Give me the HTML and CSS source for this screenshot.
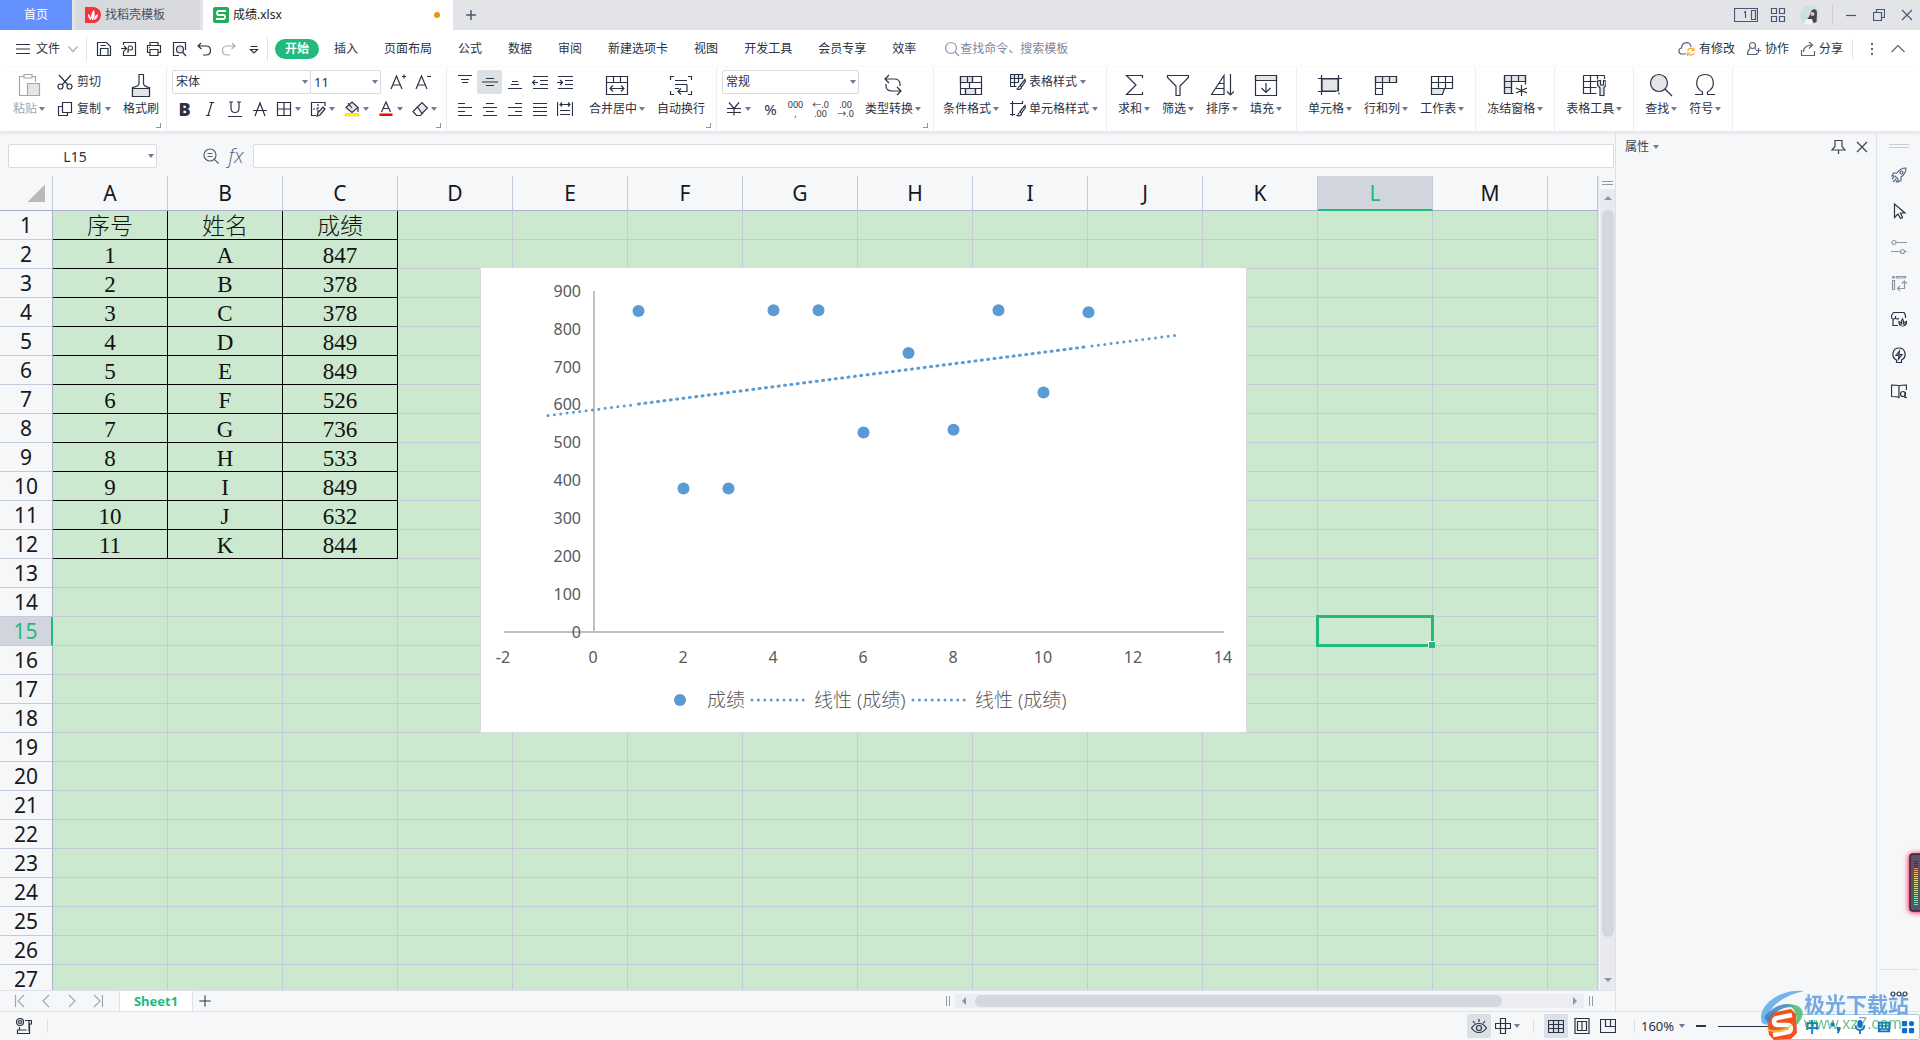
FILE: index.html
```html
<!DOCTYPE html>
<html lang="zh-CN">
<head>
<meta charset="utf-8">
<title>成绩.xlsx</title>
<link rel="stylesheet" href="styles.css">
</head>
<body>
<svg class="sprite" aria-hidden="true">
  <symbol id="menu" viewBox="0 0 16 16"><path d="M1 3.500h14M1 8h14M1 12.500h14"/></symbol>
  <symbol id="chev-down" viewBox="0 0 16 16"><path d="M3.500 5.500l4.500 5 4.500-5"/></symbol>
  <symbol id="save" viewBox="0 0 16 16"><path d="M1.500 1.500h9l4 4v9h-13zM4.500 14.500v-7h7.500v7M4.500 4.500h5"/></symbol>
  <symbol id="export" viewBox="0 0 16 16"><path d="M2.500 4V1.500h12v13h-12V10M0 7.500h5M3 5l2.500 2.500L3 10M7 12c0-2 0-7 1-7h2c2 0 2 4 0 4H7.500"/></symbol>
  <symbol id="print" viewBox="0 0 16 16"><path d="M4 4.500v-3h8v3M3.500 11.500h-2v-7h13v7h-2M4 8.500h8v6H4zM3 6.500h1"/></symbol>
  <symbol id="preview" viewBox="0 0 16 16"><path d="M14.500 9V1.500h-12v13H8"/><circle cx="9" cy="8.500" r="3.500" class="shade"/><path d="M11.500 11l3.500 4"/></symbol>
  <symbol id="undo" viewBox="0 0 16 16"><path d="M5 2L2 5l3.500 3M2 5h8c6 0 6 9 0 9H7"/></symbol>
  <symbol id="redo" viewBox="0 0 16 16"><path d="M11 2l3 3-3.500 3M14 5H6c-6 0-6 9 0 9h3"/></symbol>
  <symbol id="more" viewBox="0 0 16 16"><path d="M4.500 5.500h7M4.500 8.500L8 12l3.500-3.500z"/></symbol>
  <symbol id="search" viewBox="0 0 16 16"><circle cx="7" cy="7" r="5.500"/><path d="M11 11l4 4"/></symbol>
  <symbol id="cloud" viewBox="0 0 18 16"><path d="M8 13H4C0 13 0 7.500 3.500 7 4 0 13 0 13 6"/><path class="amber" d="M9.500 9.500C11 6.500 14.500 7 15.500 9M16 6.500V9.500h-3M16 12c-1.500 3-5 2.500-6 1M9.500 15v-3h3"/></symbol>
  <symbol id="collab" viewBox="0 0 16 16"><circle cx="6.500" cy="4.500" r="3"/><path d="M4 7.500C2 9 1.500 10 1.500 13.500h9.500v-2M9 7.500l1 1M10 9.500h5M12.500 7v5"/></symbol>
  <symbol id="share" viewBox="0 0 16 16"><path d="M1.500 9v5.500h13V10M3.500 11c0-5 4-7 8.500-7M9 1l3.500 3L9 7.500"/></symbol>
  <symbol id="chev-up" viewBox="0 0 16 16"><path d="M1.500 11L8 4.500 14.500 11"/></symbol>
  <symbol id="paste" viewBox="0 0 24 24"><path d="M7 3.500H2.500v19H10M15 3.500h3.500V9"/><path d="M7 1.500h8v3.500H7z"/><path class="shade" d="M10.500 10.500h12v12h-12z"/></symbol>
  <symbol id="cut" viewBox="0 0 16 16"><path d="M2 1l9 10M14 1L5 11"/><circle cx="3.500" cy="12.500" r="2.500"/><circle cx="12.500" cy="12.500" r="2.500"/></symbol>
  <symbol id="copy" viewBox="0 0 16 16"><path d="M5.500 1.500h9v10h-9zM5 5.500H1.500v9h9v-3"/></symbol>
  <symbol id="brush" viewBox="0 0 24 24"><path d="M3.500 23.500v-9c3-.5 6.500-1 6.500-4v-9h4.500v9c0 3 3 3.500 6 4v9z"/><path class="shade" d="M3.500 15.500h17v8h-17z"/></symbol>
  <symbol id="grow" viewBox="0 0 16 16"><path d="M1 15L6.500 2 12 15M3 11h7M12 2.500h4M14 .5v4"/></symbol>
  <symbol id="shrink" viewBox="0 0 16 16"><path d="M1 15L6.500 2 12 15M3 11h7M12 2.500h4"/></symbol>
  <symbol id="italic" viewBox="0 0 16 16"><path d="M7.500 1.500H12M4 14.500h4M10 1.500l-4 13"/></symbol>
  <symbol id="underline" viewBox="0 0 16 16"><path d="M4 1v6c0 6 8 6 8 0V1M1 15.500h14M2 1h4M10 1h4"/></symbol>
  <symbol id="strike" viewBox="0 0 16 16"><path d="M3 15L8 2l5 13M1 9.500h14"/></symbol>
  <symbol id="border" viewBox="0 0 16 16"><path d="M1.500 1.500h13v13h-13zM8 1.500v13M1.500 8h13"/></symbol>
  <symbol id="pen-border" viewBox="0 0 16 16"><path d="M15 5V1.500H1.500v13H6"/><path stroke-dasharray="2 1" d="M3 8h6M8 3v9"/><path class="shade" d="M7 15l1-3.500L13 6l2 2-5 6z"/></symbol>
  <symbol id="fill-color" viewBox="0 0 16 16"><path class="shade" d="M2 6.500L8 1l6 5.500-6 5z"/><path d="M4 2l4 5M14 6v5"/><path class="yellow" d="M1 12.500h14v2.500H1z"/></symbol>
  <symbol id="font-color" viewBox="0 0 16 16"><path d="M3.500 11L8 1l4.500 10M5 7.500h6"/><path class="red" d="M1.500 12.500h13v2.500h-13z"/></symbol>
  <symbol id="eraser" viewBox="0 0 16 16"><path class="shade" d="M5.500 6L10 1.500 15.500 7 10 12.500z"/><path d="M5.500 6L1 10.500l3.500 4h4l2-2.500"/></symbol>
  <symbol id="al-top" viewBox="0 0 16 16"><path d="M1 1.500h14M4 5.500h8M5 8.500h6"/></symbol>
  <symbol id="al-mid" viewBox="0 0 16 16"><path d="M4 4.500h8M0 8h16M4 11.500h8"/></symbol>
  <symbol id="al-bot" viewBox="0 0 16 16"><path d="M5 7.500h6M4 10.500h8M1 14.500h14"/></symbol>
  <symbol id="outdent" viewBox="0 0 16 16"><path d="M1 2.500h15M8 6.500h8M8 10.500h8M1 14.500h15M0 8.500h6M3 6L.5 8.500 3 11"/></symbol>
  <symbol id="indent" viewBox="0 0 16 16"><path d="M1 2.500h15M8 6.500h8M8 10.500h8M1 14.500h15M0 8.500h6M3 6l2.500 2.500L3 11"/></symbol>
  <symbol id="left" viewBox="0 0 16 16"><path d="M1 2.500h7M1 6.500h14M1 10.500h7M1 14.500h14"/></symbol>
  <symbol id="center" viewBox="0 0 16 16"><path d="M4 2.500h8M1 6.500h14M4 10.500h8M1 14.500h14"/></symbol>
  <symbol id="right" viewBox="0 0 16 16"><path d="M8 2.500h7M1 6.500h14M8 10.500h7M1 14.500h14"/></symbol>
  <symbol id="justify" viewBox="0 0 16 16"><path d="M1 2.500h14M1 6.500h14M1 10.500h14M1 14.500h14"/></symbol>
  <symbol id="distribute" viewBox="0 0 16 16"><path d="M.5 1v14M15.500 1v14M3 3.500h10M5 1.500l-2 2 2 2M11 1.500l2 2-2 2M3 9.500h10M3 13.500h10"/></symbol>
  <symbol id="merge" viewBox="0 0 24 24"><path d="M1.500 3.500h21v18h-21zM1.500 9.500h21M8.500 3.500v6M15.500 3.500v6M5 15.500h14M8 12.500l-3 3 3 3M16 12.500l3 3-3 3"/></symbol>
  <symbol id="wrap" viewBox="0 0 24 24"><path d="M5 3.500H1.500V7M19 3.500h3.500V7M1.500 18v3.500H5M22.500 18v3.500H19M6 7.500h12M6 11.500h12M6 15.500h4M18 11.500v7H9M12 15.500l-3 3 3 3"/></symbol>
  <symbol id="convert" viewBox="0 0 24 24"><path d="M8 2L4 6l4 4M4 6h9c4 0 6 2 6 5v2M16 22l4-4-4-4M20 18h-9c-4 0-6-2-6-5v-2"/></symbol>
  <symbol id="yen" viewBox="0 0 16 16"><path d="M3 1.500l5 6 5-6M1 7.500h14M1 11.500h14M8 7.500v7"/></symbol>
  <symbol id="cond" viewBox="0 0 24 24"><path class="shade" d="M1.500 3.500h12v6h-12zM6.500 15.500h10v6h-10z"/><path d="M1.500 3.500h21v18h-21zM1.500 9.500h21M1.500 15.500h21M13.500 3.500v6M8.500 3.500v6M10.500 9.500v6M6.500 15.500v6M16.500 15.500v6"/></symbol>
  <symbol id="tstyle" viewBox="0 0 16 16"><path class="shade" d="M.5.500h12v4H.5z"/><path d="M.5.500h12v4M.5.500v12h6M.5 4.500h12M.5 8.500h8M4.500.500v12M8.500.500v8M15 5.500l-5 6 1.500 1.500 4-5.500zM10 12c-2 0-1 3-3.500 3 3 1 5 0 5-2"/></symbol>
  <symbol id="cstyle" viewBox="0 0 16 16"><path d="M0 2.500h13M2.500 0v15M0 13.500h5M15 4.500l-5 6 1.500 1.500 4-5.500zM10 11.500c-2 0-1 3-3.500 3 3 1 5 0 5-2M12.500 0v3"/></symbol>
  <symbol id="sum" viewBox="0 0 24 24"><path d="M20.500 5V2.500h-16L14 12l-9.500 9.500h16V19"/></symbol>
  <symbol id="filter" viewBox="0 0 24 24"><path d="M1.500 2.500h21v2L14 13v9.500h-4V13L1.500 4.500z"/></symbol>
  <symbol id="sort" viewBox="0 0 24 24"><path d="M1.500 21.500L14 2.500v19zM6 15.500h8M9 10.500h5M20.500 1v21M17 18.500l3.500 3.500 3.500-3.500"/></symbol>
  <symbol id="fill" viewBox="0 0 24 24"><path class="shade" d="M1.500 2.500h21v5h-21z"/><path d="M1.500 2.500h21v20h-21zM12 10v9M7.500 15l4.500 4.500 4.500-4.500"/></symbol>
  <symbol id="cell" viewBox="0 0 24 24"><path class="shade" d="M4 6h16v12H4z"/><path d="M0 5.500h24M3.500 2v20M20.500 2v16M0 18.500h18M21 19.500v2"/></symbol>
  <symbol id="rowcol" viewBox="0 0 24 24"><path class="shade" d="M1.500 3.500h21v6h-21z"/><path d="M1.500 3.500h21v6h-14v12h-7zM8.500 3.500v6h-7M15.500 3.500v6M1.500 15.500h7"/></symbol>
  <symbol id="sheet" viewBox="0 0 24 24"><path class="shade" d="M1.500 15.500h13l-2 6h-11z"/><path d="M1.500 3.500h21v12h-21zM1.500 9.500h21M8.500 3.500v12M15.500 3.500v12"/></symbol>
  <symbol id="freeze" viewBox="0 0 24 24"><path class="shade" d="M1.500 2.500h21v6h-14v12h-7z"/><path d="M1.500 2.500h21v9M1.500 2.500v18h9M1.500 8.500h21M8.500 2.500v18M15.500 2.500v6M1.500 14.500h7M18.500 12v11M13 15l11 5M24 15l-11 5"/></symbol>
  <symbol id="tools" viewBox="0 0 24 24"><path d="M1.500 2.500h21M22.500 2.500V6M1.500 2.500v18h13M1.500 8.500h13M1.500 14.500h13M8.500 2.500v18M15.500 2.500v4"/><path class="shade" d="M15.500 8v4l2.500 3v7.500h4V15l2-3V8l-2.500-.5V12h-3V7.500z"/></symbol>
  <symbol id="find" viewBox="0 0 24 24"><circle class="shade" cx="10" cy="10" r="8.500"/><path d="M16 16l7 7"/></symbol>
  <symbol id="omega" viewBox="0 0 24 24"><path d="M2 21.500h7.500V19c-9-5-7-17.500 2.500-17.500S23.500 14 14.500 19v2.500H22"/></symbol>
  <symbol id="zoomout" viewBox="0 0 16 16"><circle cx="7" cy="7" r="6"/><path d="M4.500 5.500h5M4.500 8.500h5M11.500 11.500l4 4"/></symbol>
  <symbol id="pin" viewBox="0 0 16 16"><path d="M5 1.500h7v6l3 3.500H2l3-3.500zM8.500 11v4"/></symbol>
  <symbol id="close" viewBox="0 0 16 16"><path d="M3 3l10 10M13 3L3 13"/></symbol>
  <symbol id="rocket" viewBox="0 0 16 16"><path d="M15 1c-5 0-7 2-9 5H2.500L1 9h3l3 3v3l3-1.500V10c3-2 5-4 5-9zM1 12l2-2M2 15l3-3M5 15.500l1-2"/><circle cx="10.500" cy="5.500" r="1.500"/></symbol>
  <symbol id="pointer" viewBox="0 0 16 16"><path d="M3.500 1v13.500L7 11l2.500 4.500 2-1L9.500 10H14z"/></symbol>
  <symbol id="sliders" viewBox="0 0 16 16"><circle cx="3" cy="3.500" r="2"/><path d="M5 3.500h11M0 12.500h9.500M13.500 12.500H16"/><circle cx="11.500" cy="12.500" r="2"/></symbol>
  <symbol id="trans" viewBox="0 0 16 16"><path d="M1.500 1.500h2v1.500h-2zM5.500 1.500h9v1.500h-9zM1.500 5.500h2v9h-2zM7 13.500h6.500V7M9 11l-2.500 2.500L9 16M11 8.500L13.500 6 16 8.500"/></symbol>
  <symbol id="store" viewBox="0 0 16 16"><path d="M7 14.500H2V8M2.500 1.500h10.500l1.500 3V7M2.500 1.500L.5 4.500V7c1 1.500 3 1.500 4 0 1 1.500 2.500 1.500 3.500 0M4.500 5v2"/><path class="solid" d="M11.500 15.500C8 15.500 7 13 7.500 9.500l2 1.500 2-4.500 2 4.500 2.500-1.500c.5 3.500-1 6-4.500 6z"/><path stroke="#f5f7f9" stroke-width=".7" d="M11.500 9.500v5.500M9 11.500l2 3.500M14 11.500l-2 3.500"/></symbol>
  <symbol id="bulb" viewBox="0 0 16 16"><path d="M5.500 15.500h5V13c6-3 4-12-2.500-12S-.5 10 5.500 13zM8.500 4L5 8.500h3L7.500 12 11 7.500H8z"/></symbol>
  <symbol id="book" viewBox="0 0 16 16"><path d="M8 14.500c-2-1-4-1-7.500-1V2c4 0 6 0 7.500 1zM8 3c2-1 4-1 7.500-1v5"/><circle cx="12" cy="11" r="2.500"/><path d="M14 9v5.500h2"/></symbol>
  <symbol id="first" viewBox="0 0 16 16"><path d="M3.500 2v12M12 2L6 8l6 6"/></symbol>
  <symbol id="prev" viewBox="0 0 16 16"><path d="M11 2L5 8l6 6"/></symbol>
  <symbol id="next" viewBox="0 0 16 16"><path d="M5 2l6 6-6 6"/></symbol>
  <symbol id="last" viewBox="0 0 16 16"><path d="M4 2l6 6-6 6M12.500 2v12"/></symbol>
  <symbol id="plus" viewBox="0 0 16 16"><path d="M8 1.500v13M1.500 8h13"/></symbol>
  <symbol id="macro" viewBox="0 0 16 16"><circle class="shade" cx="4" cy="4" r="3.500"/><circle cx="4" cy="4" r="1.500"/><path d="M9 2.500h6.500V6h-2v9.500h-12V12h9M3.500 9v3M13 2.500V13"/></symbol>
  <symbol id="eye" viewBox="0 0 16 16"><path d="M.5 10c4-6 11-6 15 0-4 6-11 6-15 0zM8 1v3M2 3l2 2.500M14 3l-2 2.500"/><circle cx="8" cy="10" r="2.500"/></symbol>
  <symbol id="cross" viewBox="0 0 16 16"><path d="M5.500.500h5v5h5v5h-5v5h-5v-5h-5v-5h5zM5.500 5.500h5v5h-5z"/></symbol>
  <symbol id="gridview" viewBox="0 0 16 16"><path d="M.5 2.500h15v12H.5zM.5 6.500h15M.5 10.500h15M5.500 2.500v12M10.500 2.500v12"/></symbol>
  <symbol id="pageview" viewBox="0 0 16 16"><path d="M1 .5h14v15H1zM3.500 3.500h9v9h-9zM8 3.500v9"/></symbol>
  <symbol id="breakview" viewBox="0 0 16 16"><path d="M.5 1.500h15v13H.5zM5.500 1.500v7h10M10.500 1.500v7"/></symbol>
</svg>

<header class="titlebar">
  <button class="tab-home">首页</button>
  <button class="tab-doc">
    <svg class="logo" viewBox="0 0 16 16"><path fill="#f5333f" d="M0 0h8a8 8 0 010 16H0z"/><path fill="#fff" d="M7 13C5 9 7 5 9 3c1 3 1 7-1 10zM5.500 13C3 11 3 9 3 7c2 1 3 3 3 6zM9 13c0-3 1-5 4-6 0 3-1 5-4 6z"/></svg>
    <span>找稻壳模板</span>
  </button>
  <button class="tab-doc active">
    <svg class="logo" viewBox="0 0 16 16"><rect width="16" height="16" rx="2" fill="#1fae54"/><path fill="none" stroke="#fff" stroke-width="1.800" d="M13 4H5.500C3.500 4 3.500 8 5.500 8h5c2 0 2 4 0 4H3"/></svg>
    <span>成绩.xlsx</span><i class="unsaved"></i>
  </button>
  <button class="icon-btn new-tab" aria-label="新建"><svg class="i12"><use href="#plus"/></svg></button>
  <div class="window-tools">
    <svg class="win-docs" viewBox="0 0 24 14"><path d="M.5.500h23v13H.5zM17.500 2.500h4v9h-4zM11.500 10V3.500L10 4.500"/></svg>
    <svg class="i16" viewBox="0 0 16 16"><path d="M1.500 1.500h5v5h-5zM9.500 1.500h5v5h-5zM1.500 9.500h5v5h-5zM9.500 9.500h5v5h-5z"/></svg>
    <svg class="avatar" viewBox="0 0 20 20"><circle cx="10" cy="10" r="10" fill="#cddfe4"/><path fill="#eef3f5" d="M4 19c1-4 3-6 7-6l2 7z"/><path fill="#4b4148" d="M12 5c3-2 5 0 5 3l-.5 9-3 1-1.500-4-5 0c3-2 3-6 5-9z"/><circle cx="12.500" cy="9" r="2" fill="#e8c0b0"/></svg>
    <span class="vline"></span>
    <svg class="i12" viewBox="0 0 12 12"><path d="M1 6.500h10"/></svg>
    <svg class="i12" viewBox="0 0 12 12"><path d="M.5 3.500h8v8h-8zM3.500 3V.5h8v8H9"/></svg>
    <svg class="i12" viewBox="0 0 12 12"><path d="M1 1l10 10M11 1L1 11"/></svg>
  </div>
</header>

<nav class="menubar">
  <button class="file-btn"><svg class="i16"><use href="#menu"/></svg><span>文件</span><svg class="i16 pale"><use href="#chev-down"/></svg></button>
  <div class="quick">
    <button aria-label="保存"><svg class="i16"><use href="#save"/></svg></button>
    <button aria-label="输出"><svg class="i16"><use href="#export"/></svg></button>
    <button aria-label="打印"><svg class="i16"><use href="#print"/></svg></button>
    <button aria-label="预览"><svg class="i16"><use href="#preview"/></svg></button>
    <button aria-label="撤销"><svg class="i16"><use href="#undo"/></svg></button>
    <button aria-label="恢复"><svg class="i16 pale"><use href="#redo"/></svg></button>
    <button aria-label="更多"><svg class="i16"><use href="#more"/></svg></button>
  </div>
  <div class="menus">
    <button class="current">开始</button><button>插入</button><button>页面布局</button><button>公式</button><button>数据</button><button>审阅</button><button>新建选项卡</button><button>视图</button><button>开发工具</button><button>会员专享</button><button>效率</button>
  </div>
  <label class="search"><svg class="i16"><use href="#search"/></svg><input type="text" placeholder="查找命令、搜索模板"></label>
  <div class="account">
    <button><svg class="i18"><use href="#cloud"/></svg>有修改</button>
    <button><svg class="i16"><use href="#collab"/></svg>协作</button>
    <button><svg class="i16"><use href="#share"/></svg>分享</button>
    <span class="vline"></span>
    <button aria-label="更多"><svg class="dots" viewBox="0 0 4 12"><path d="M1 1h2M1 6h2M1 11h2"/></svg></button>
    <button aria-label="收起"><svg class="i16"><use href="#chev-up"/></svg></button>
  </div>
</nav>

<section class="ribbon">
  <div class="group clip">
    <button class="big disabled"><svg class="i24"><use href="#paste"/></svg><span>粘贴<i class="caret"></i></span></button>
    <div class="rows">
      <button class="inline"><svg class="i16"><use href="#cut"/></svg>剪切</button>
      <button class="inline"><svg class="i16"><use href="#copy"/></svg>复制<i class="caret"></i></button>
    </div>
    <button class="big"><svg class="i24"><use href="#brush"/></svg><span>格式刷</span></button>
    <i class="corner"></i>
  </div>
  <div class="group font">
    <div class="rows">
      <div class="row">
        <span class="pick family"><select aria-label="字体"><option>宋体</option></select></span><span class="pick size"><select aria-label="字号"><option>11</option></select></span>
        <button class="tool first" aria-label="增大字号"><svg class="i16"><use href="#grow"/></svg></button>
        <button class="tool" aria-label="减小字号"><svg class="i16"><use href="#shrink"/></svg></button>
      </div>
      <div class="row">
        <button class="tool bold">B</button>
        <button class="tool" aria-label="斜体"><svg class="i16"><use href="#italic"/></svg></button>
        <button class="tool" aria-label="下划线"><svg class="i16"><use href="#underline"/></svg></button>
        <button class="tool" aria-label="删除线"><svg class="i16"><use href="#strike"/></svg></button>
        <button class="drop" aria-label="边框"><svg class="i16"><use href="#border"/></svg><i class="caret"></i></button>
        <button class="drop" aria-label="绘制边框"><svg class="i16"><use href="#pen-border"/></svg><i class="caret"></i></button>
        <button class="drop" aria-label="填充颜色"><svg class="i16"><use href="#fill-color"/></svg><i class="caret"></i></button>
        <button class="drop" aria-label="字体颜色"><svg class="i16"><use href="#font-color"/></svg><i class="caret"></i></button>
        <button class="drop" aria-label="清除"><svg class="i16"><use href="#eraser"/></svg><i class="caret"></i></button>
      </div>
    </div>
    <i class="corner"></i>
  </div>
  <div class="group align">
    <div class="rows">
      <div class="row">
        <button class="tool" aria-label="顶端对齐"><svg class="i16"><use href="#al-top"/></svg></button>
        <button class="tool on" aria-label="垂直居中"><svg class="i16"><use href="#al-mid"/></svg></button>
        <button class="tool" aria-label="底端对齐"><svg class="i16"><use href="#al-bot"/></svg></button>
        <button class="tool" aria-label="减少缩进"><svg class="i16"><use href="#outdent"/></svg></button>
        <button class="tool" aria-label="增加缩进"><svg class="i16"><use href="#indent"/></svg></button>
      </div>
      <div class="row">
        <button class="tool" aria-label="左对齐"><svg class="i16"><use href="#left"/></svg></button>
        <button class="tool" aria-label="居中"><svg class="i16"><use href="#center"/></svg></button>
        <button class="tool" aria-label="右对齐"><svg class="i16"><use href="#right"/></svg></button>
        <button class="tool" aria-label="两端对齐"><svg class="i16"><use href="#justify"/></svg></button>
        <button class="tool" aria-label="分散对齐"><svg class="i16"><use href="#distribute"/></svg></button>
      </div>
    </div>
    <button class="big"><svg class="i24"><use href="#merge"/></svg><span>合并居中<i class="caret"></i></span></button>
    <button class="big"><svg class="i24"><use href="#wrap"/></svg><span>自动换行</span></button>
    <i class="corner"></i>
  </div>
  <div class="group number">
    <div class="rows">
      <div class="row"><span class="pick format"><select aria-label="数字格式"><option>常规</option></select></span></div>
      <div class="row">
        <button class="drop wide" aria-label="货币"><svg class="i16"><use href="#yen"/></svg><i class="caret"></i></button>
        <button class="tool pct">%</button>
        <button class="tool digits">000<br>,</button>
        <button class="tool digits">←.0<br>.00</button>
        <button class="tool digits">.00<br>→.0</button>
      </div>
    </div>
    <button class="big"><svg class="i24"><use href="#convert"/></svg><span>类型转换<i class="caret"></i></span></button>
    <i class="corner"></i>
  </div>
  <div class="group styles">
    <button class="big"><svg class="i24"><use href="#cond"/></svg><span>条件格式<i class="caret"></i></span></button>
    <div class="rows">
      <button class="inline"><svg class="i16"><use href="#tstyle"/></svg>表格样式<i class="caret"></i></button>
      <button class="inline"><svg class="i16"><use href="#cstyle"/></svg>单元格样式<i class="caret"></i></button>
    </div>
  </div>
  <div class="group editing">
    <button class="big"><svg class="i24"><use href="#sum"/></svg><span>求和<i class="caret"></i></span></button>
    <button class="big"><svg class="i24"><use href="#filter"/></svg><span>筛选<i class="caret"></i></span></button>
    <button class="big"><svg class="i24"><use href="#sort"/></svg><span>排序<i class="caret"></i></span></button>
    <button class="big"><svg class="i24"><use href="#fill"/></svg><span>填充<i class="caret"></i></span></button>
  </div>
  <div class="group">
    <button class="big"><svg class="i24"><use href="#cell"/></svg><span>单元格<i class="caret"></i></span></button>
    <button class="big"><svg class="i24"><use href="#rowcol"/></svg><span>行和列<i class="caret"></i></span></button>
    <button class="big"><svg class="i24"><use href="#sheet"/></svg><span>工作表<i class="caret"></i></span></button>
  </div>
  <div class="group"><button class="big"><svg class="i24"><use href="#freeze"/></svg><span>冻结窗格<i class="caret"></i></span></button></div>
  <div class="group"><button class="big"><svg class="i24"><use href="#tools"/></svg><span>表格工具<i class="caret"></i></span></button></div>
  <div class="group">
    <button class="big"><svg class="i24"><use href="#find"/></svg><span>查找<i class="caret"></i></span></button>
    <button class="big"><svg class="i24"><use href="#omega"/></svg><span>符号<i class="caret"></i></span></button>
  </div>
</section>

<main class="main">
  <section class="workspace">
    <div class="formula">
      <span class="pick namebox"><input type="text" aria-label="名称框" value="L15"></span>
      <button class="icon-btn" aria-label="浏览"><svg class="i16"><use href="#zoomout"/></svg></button>
      <button class="icon-btn fx">fx</button>
      <input class="formula-input" type="text" aria-label="编辑栏">
    </div>
    <div class="sheet">
      <div class="grid-wrap">
        <table class="grid" id="grid"></table>
        <svg class="chart" viewBox="1 1 765 464" role="img" aria-label="成绩散点图">
          <g class="axis"><path d="M114 24v341M24 365h720"/></g>
          <g class="ylabels">
            <text x="101" y="30">900</text><text x="101" y="68">800</text><text x="101" y="106">700</text><text x="101" y="143">600</text><text x="101" y="181">500</text><text x="101" y="219">400</text><text x="101" y="257">300</text><text x="101" y="295">200</text><text x="101" y="333">100</text><text x="101" y="371">0</text>
          </g>
          <g class="xlabels">
            <text x="23" y="396">-2</text><text x="113" y="396">0</text><text x="203" y="396">2</text><text x="293" y="396">4</text><text x="383" y="396">6</text><text x="473" y="396">8</text><text x="563" y="396">10</text><text x="653" y="396">12</text><text x="743" y="396">14</text>
          </g>
          <g class="points" id="points"></g>
          <path class="trend" d="M68 148.500L156 137.500M612 79L698 68"/>
          <path class="trend double" d="M158.500 137L608.500 79.500"/>
          <circle class="dot" cx="200" cy="433" r="6"/>
          <path class="trend" d="M272 433h54M433 433h54"/>
          <g class="legend"><text x="227" y="440">成绩</text><text x="334" y="440">线性 (成绩)</text><text x="495" y="440">线性 (成绩)</text></g>
        </svg>
      </div>
      <div class="vscroll">
        <i class="split-h"></i>
        <div class="vtrack"><i class="tri up"></i><i class="vthumb"></i><i class="tri down"></i></div>
      </div>
    </div>
    <footer class="sheetbar">
      <div class="sheetnav">
        <button aria-label="第一个"><svg class="i16"><use href="#first"/></svg></button>
        <button aria-label="上一个"><svg class="i16"><use href="#prev"/></svg></button>
        <button aria-label="下一个"><svg class="i16"><use href="#next"/></svg></button>
        <button aria-label="最后一个"><svg class="i16"><use href="#last"/></svg></button>
      </div>
      <button class="sheettab">Sheet1</button>
      <button class="icon-btn add-sheet" aria-label="新建工作表"><svg class="i16"><use href="#plus"/></svg></button>
      <div class="hscroll"><i class="split-v"></i><div class="htrack"><i class="tri prev"></i><i class="hthumb"></i><i class="tri next"></i></div><i class="split-v"></i></div>
    </footer>
  </section>
  <aside class="panel">
    <button class="panel-title">属性<i class="caret"></i></button>
    <button class="icon-btn" aria-label="固定"><svg class="i16"><use href="#pin"/></svg></button>
    <button class="icon-btn" aria-label="关闭"><svg class="i16"><use href="#close"/></svg></button>
  </aside>
  <aside class="rail">
    <i class="handle"></i>
    <button aria-label="快捷"><svg class="i16 slate"><use href="#rocket"/></svg></button>
    <button aria-label="选择"><svg class="i16"><use href="#pointer"/></svg></button>
    <button aria-label="设置"><svg class="i16 dim"><use href="#sliders"/></svg></button>
    <button aria-label="转置"><svg class="i16 dim"><use href="#trans"/></svg></button>
    <button aria-label="稻壳"><svg class="i16"><use href="#store"/></svg></button>
    <button aria-label="技巧"><svg class="i16"><use href="#bulb"/></svg></button>
    <button aria-label="帮助"><svg class="i16"><use href="#book"/></svg></button>
    <button class="rail-more" aria-label="更多"><svg viewBox="0 0 18 6"><circle cx="3" cy="3" r="2"/><circle cx="9" cy="3" r="2"/><circle cx="15" cy="3" r="2"/></svg></button>
  </aside>
</main>

<footer class="statusbar">
  <button class="icon-btn macro" aria-label="宏"><svg class="i16"><use href="#macro"/></svg></button>
  <span class="vline"></span>
  <div class="views">
    <button class="view on" aria-label="护眼"><svg class="i16"><use href="#eye"/></svg></button>
    <button class="view-drop" aria-label="阅读"><svg class="i16"><use href="#cross"/></svg><i class="caret"></i></button>
    <span class="vline"></span>
    <button class="view on" aria-label="普通视图"><svg class="i16"><use href="#gridview"/></svg></button>
    <button class="view" aria-label="页面布局"><svg class="i16"><use href="#pageview"/></svg></button>
    <button class="view" aria-label="分页预览"><svg class="i16"><use href="#breakview"/></svg></button>
    <span class="vline last"></span>
    <button class="zoom-level">160%<i class="caret"></i></button>
    <button class="minus" aria-label="缩小"></button>
    <i class="zoom-line"></i>
  </div>
</footer>

<svg class="meter" viewBox="0 0 18 72" aria-hidden="true">
  <defs><linearGradient id="heat" x1="0" y1="0" x2="0" y2="1"><stop offset="0" stop-color="#f58a6a"/><stop offset=".3" stop-color="#f2dd70"/><stop offset=".6" stop-color="#b9e08a"/><stop offset="1" stop-color="#63dcd8"/></linearGradient>
  <filter id="glow" x="-1" y="-.3" width="3" height="1.600"><feGaussianBlur stdDeviation="2.500"/></filter></defs>
  <rect x="6" y="7" width="20" height="60" rx="5" fill="#ff2d62" filter="url(#glow)"/>
  <rect x="8" y="8" width="20" height="57" rx="3" fill="#5f5263" stroke="#33283a" stroke-width="1.500"/>
  <path d="M14 15v7" stroke="#3b3140" stroke-width="4" stroke-dasharray="1 1"/>
  <rect x="12" y="22" width="4" height="38" fill="url(#heat)"/>
  <path d="M14 23v37" stroke="#5f5263" stroke-width="5" stroke-dasharray="1 1"/>
</svg>

<div class="ime">
  <b>中</b>
  <svg viewBox="0 0 16 16"><circle cx="4" cy="5" r="2.500"/><path d="M9 8h4v3l-2 4H9l1-3H9z"/></svg>
  <svg viewBox="0 0 16 16"><rect x="5" y="0" width="6" height="9" rx="3"/><path d="M2 6h2c0 6 8 6 8 0h2c0 4-2 6-5 6.500V16H7v-3.500C4 12 2 10 2 6z"/></svg>
  <svg viewBox="0 0 16 16"><path fill-rule="evenodd" d="M1 2h14v12H1zM3 4v2h2V4zM7 4v2h2V4zM11 4v2h2V4zM3 7.500v2h2v-2zM7 7.500v2h2v-2zM11 7.500v2h2v-2zM4 11v1h8v-1z"/></svg>
  <svg viewBox="0 0 16 16"><rect x="1" y="1" width="6" height="6" rx="1"/><rect x="9" y="1" width="6" height="6" rx="3"/><rect x="1" y="9" width="6" height="6" rx="1"/><rect x="9" y="9" width="6" height="6" rx="1"/></svg>
</div>
<svg class="ime-logo" viewBox="0 0 44 50" aria-hidden="true">
  <path fill="#f4511e" d="M11 23l20-4 5 5 1 19-6 6-17 1-5-5-2-17z"/>
  <path fill="none" stroke="#fff" stroke-width="4.500" d="M32 25l-15 3c-4 1-4 6 0 7l10 0c5 0 5 6 1 7l-15 3"/>
  <path fill="#5aaae8" opacity=".85" d="M44 1C20-2-4 16 2 33c3 2 5 2 7 1C3 22 20 6 44 1z"/>
  <path fill="#3d83c5" opacity=".85" d="M4 27c9-11 23-17 31-10-13-1-22 5-27 16z"/>
  <path fill="#4db96b" opacity=".85" d="M27 14c17 0 21 10 8 23 3-10 2-17-8-23z"/>
  <path fill="#e8c542" opacity=".85" d="M5 38c9 4 21 2 28-5-5 10-19 13-28 5z"/>
</svg>
<div class="watermark"><span class="wm-name">极光下载站</span><span class="wm-url">www.xz7.com</span></div>
<script src="app.js"></script>
</body>
</html>
```
FILE: styles.css
```css
:root {
  --ink: #2b3245;
  --line: #dfe1e8;
  --bg: #f5f7f9;
  --green: #22b97d;
  --cell: #cce8cf;
  --gridline: #c5c9dc;
  --head-line: #a9b0cc;
}
* { box-sizing: border-box; }
body {
  margin: 0;
  height: 100vh;
  display: flex;
  flex-direction: column;
  overflow: hidden;
  background: var(--bg);
  color: var(--ink);
  font: 12px/16px "Noto Sans", "Noto Sans CJK SC", sans-serif;
}
button, input, select { font: inherit; color: inherit; }
button { border: 0; padding: 0; background: none; display: flex; align-items: center; justify-content: center; white-space: nowrap; }
svg { fill: none; stroke: currentColor; stroke-width: 1.2px; flex: none; }
.sprite { position: absolute; width: 0; height: 0; }
.shade { fill: #e3e5e9; }
.solid { fill: currentColor; stroke: none; }
.amber { stroke: #f5a623; }
.yellow { fill: #ff0; stroke: #c9c900; stroke-width: 0.5px; }
.red { fill: #f00; stroke: none; }
.i12 { width: 12px; height: 12px; }
.i16 { width: 16px; height: 16px; }
.i18 { width: 18px; height: 16px; }
.i24 { width: 24px; height: 24px; }
.pale { color: #a9acb4; }
.dim { color: #9297a8; }
.slate { color: #586684; }
.vline { width: 1px; height: 20px; background: var(--line); }
.icon-btn { width: 24px; height: 24px; }
.caret { border: 3px solid transparent; border-top: 4px solid #6e7a96; border-bottom: 0; }

/* title bar */
.titlebar { display: flex; height: 30px; background: #e3e4e8; }
.tab-home { width: 72px; margin-right: 3px; background: #6591ff; color: #fff; }
.tab-doc { width: 125px; margin-right: 3px; padding: 0 10px; gap: 4px; justify-content: flex-start; background: #d8d9dc; color: #4b5060; }
.tab-doc.active { width: 250px; margin-right: 0; background: #fff; color: #222; }
.logo { width: 16px; height: 16px; stroke: none; }
.unsaved { width: 6px; height: 6px; margin-left: auto; margin-right: 3px; border-radius: 50%; background: #e59a0c; }
.new-tab { margin: 3px 6px; color: #4a556e; }
.new-tab svg { stroke-width: 2px; }
.window-tools { display: flex; align-items: center; gap: 16px; margin-left: auto; padding-right: 7px; color: #4a5878; }
.window-tools > .vline { margin: 0 -4px; background: #cbcdd3; }
.win-docs { width: 24px; height: 14px; margin-right: -4px; }
.avatar { width: 20px; height: 20px; margin-left: -2px; stroke: none; }

/* menu bar */
.menubar { display: flex; align-items: center; height: 37px; background: #fff; }
.file-btn { gap: 5px; padding-left: 15px; }
.quick { display: flex; margin: 0 7px 0 5px; border: solid var(--line); border-width: 0 1px; height: 24px; padding: 0 1px 0 4px; }
.quick button { width: 25px; }
.menus { display: flex; gap: 26px; align-items: center; }
.menus .current { width: 44px; height: 20px; margin-right: -11px; border-radius: 10px; background: var(--green); color: #fff; font-weight: 700; }
.search { display: flex; align-items: center; margin-left: 28px; color: #8d97b0; }
.search input { width: 140px; padding: 0; border: 0; outline: 0; }
.search input::placeholder { color: #8087a0; opacity: 1; }
.account { display: flex; align-items: center; gap: 11px; margin-left: auto; padding-right: 14px; }
.account button { gap: 3px; }
.account svg { color: #59627a; }
.account .vline { margin: 0 1px 0 -2px; }
.dots { width: 4px; height: 12px; stroke-width: 2px; margin: 0 5px; }

/* ribbon */
.ribbon { display: flex; height: 65px; background: #fff; border-bottom: 1px solid #e6e8ec; box-shadow: 0 1px 3px #dfe1e6; z-index: 1; flex: none; }
.group { position: relative; display: flex; align-items: flex-start; gap: 12px; padding: 3px 11px 0; border-right: 1px solid #eceef2; flex: none; }
.big { flex-direction: column; gap: 4px; padding-top: 3px; }
.big span { display: flex; align-items: center; gap: 2px; }
.disabled { color: #a3a6ad; }
.rows { display: flex; flex-direction: column; gap: 3px; }
.row { display: flex; height: 24px; }
.inline { height: 24px; gap: 4px; justify-content: flex-start; }
.tool { width: 25px; height: 24px; border-radius: 2px; }
.tool.first { margin-left: 4px; }
.tool.on { background: #dce1e6; }
.bold { font-size: 18px; font-weight: 900; }
.drop { width: 34px; padding-left: 4px; gap: 3px; justify-content: flex-start; }
.drop.wide { width: 36px; }
.pct { font-size: 15px; }
.digits { font-size: 9px; line-height: 9px; }
.clip { width: 167px; gap: 12px; padding-left: 13px; padding-right: 0; }
.font { width: 280px; padding: 3px 0 0 5px; }
.align { width: 270px; padding: 3px 0 0 5px; }
.number { width: 217px; padding: 3px 0 0 5px; gap: 6px; }
.styles { gap: 11px; padding: 3px 8px 0 9px; }
.styles .inline { gap: 3px; }
.editing { padding-right: 14px; }
.corner { position: absolute; right: 5px; bottom: 3px; width: 5px; height: 5px; border: solid #8b93a8; border-width: 0 1px 1px 0; }
.pick { position: relative; display: flex; }
.pick select, .pick input { width: 100%; height: 24px; padding: 0 3px; border: 1px solid #d9dbe0; border-radius: 2px; background: #fff; appearance: none; outline: 0; }
.pick::after { content: ""; position: absolute; right: 3px; top: 10px; border: 3px solid transparent; border-top: 4px solid #6e7a96; border-bottom: 0; }
.family { width: 139px; margin-right: -1px; }
.size { width: 71px; }
.size select { font-size: 13px; }
.format { width: 137px; }

/* workspace */
.main { display: flex; flex: 1; min-height: 0; }
.workspace { display: flex; flex-direction: column; flex: 1; min-width: 0; }
.formula { display: flex; align-items: flex-start; height: 44px; padding: 12px 1px 8px 8px; flex: none; }
.formula .icon-btn { color: #59627a; }
.namebox { width: 149px; margin-right: 42px; }
.namebox input { text-align: center; font-size: 14px; padding: 0 18px 0 3px; }
.fx { font: italic 20px/24px "Open Sans", sans-serif; margin: 0 5px 0 1px; font-weight: 300; }
.formula-input { flex: 1; height: 24px; border: 1px solid #d9dbe0; border-radius: 2px; background: #fff; outline: 0; }
.sheet { display: flex; flex: 1; min-height: 0; }
.grid-wrap { position: relative; flex: 1; min-width: 0; overflow: hidden; border-right: 1px solid var(--line); }
.grid { width: 100%; table-layout: fixed; border-collapse: separate; border-spacing: 0; text-align: center; }
.grid th, .grid td { height: 29px; padding: 0; border: solid var(--gridline); border-width: 0 1px 1px 0; }
.grid td { padding-top: 3px; background: var(--cell); font: 23px/25px "Liberation Serif", "Noto Sans CJK SC", serif; font-weight: 300; color: #111; }
.grid th { font: 21px/28px "Noto Sans", sans-serif; color: #16181f; background: var(--bg); }
.grid thead th { height: 35px; border-color: var(--head-line); border-right-color: #c3c8da; }
.grid tbody th { border-right-color: var(--head-line); }
.grid .corner-head { width: 53px; }
.corner-head::after { content: ""; display: block; margin-left: 27px; width: 18px; height: 18px; background: linear-gradient(135deg, transparent 50%, #b9babb 50%); }
.col { width: 115px; }
.grid td.data { border-color: #000; }
.grid th.sel { background: #d1d5dd; color: var(--green); }
.grid thead th.sel { border-bottom: 2px solid var(--green); }
.grid tbody th.sel { border-right: 2px solid var(--green); }
.cursor { position: relative; }
.cursor::before { content: ""; position: absolute; inset: -2px; border: 3px solid var(--green); }
.cursor::after { content: ""; position: absolute; right: -3px; bottom: -3px; width: 6px; height: 6px; background: var(--green); border: solid #fff; border-width: 1px 0 0 1px; }
.chart { position: absolute; left: 480px; top: 91px; width: 767px; height: 466px; background: #fff; border: 1px solid #d9d9d9; }
.chart text { fill: #595959; stroke: none; font: 16px "Noto Sans", sans-serif; }
.chart .ylabels text { text-anchor: end; }
.chart .xlabels text { text-anchor: middle; }
.chart .legend text { font: 300 19px "Noto Sans", "Noto Sans CJK SC", sans-serif; }
.axis { stroke: #bfbfbf; stroke-width: 2px; }
.dot, .points circle { fill: #5b9bd5; stroke: none; }
.trend { stroke: #5b9bd5; stroke-width: 3px; stroke-linecap: round; stroke-dasharray: 0 6.4; }
.double { stroke-dasharray: 1 5.4; }

.vscroll { width: 16px; padding-left: 1px; display: flex; flex-direction: column; gap: 4px; }
.split-h { margin: 5px 2px 0; height: 4px; border: solid #8f99b0; border-width: 1px 0; }
.vtrack { flex: 1; display: flex; flex-direction: column; align-items: center; background: #e9eaf0; padding: 7px 0 8px; }
.vthumb { flex: 1; width: 12px; margin: 10px 0 41px; border-radius: 6px; background: #d4d7e0; }
.tri { border: 4px solid transparent; }
.up { border-top: 0; border-bottom-color: #8993ab; }
.down { border-bottom: 0; border-top-color: #8993ab; }
.tri.prev { border-left: 0; border-right-color: #8993ab; }
.tri.next { border-right: 0; border-left-color: #8993ab; }
.sheetbar { display: flex; height: 22px; border: solid var(--line); border-width: 1px 0; flex: none; }
.sheetnav { display: flex; gap: 10px; padding: 0 13px 0 12px; color: #a3a7b0; }
.sheettab { width: 74px; background: #fff; border: solid var(--line); border-width: 0 1px; color: var(--green); font-weight: 700; font-size: 13px; }
.add-sheet { height: 20px; }
.add-sheet svg { width: 14px; height: 14px; }
.hscroll { display: flex; align-items: center; gap: 5px; width: 669px; margin-left: auto; padding-right: 22px; }
.split-v { width: 4px; height: 10px; border: solid #8f99b0; border-width: 0 1px; }
.htrack { flex: 1; display: flex; align-items: center; height: 14px; padding: 0 7px; background: #ebedf2; }
.hthumb { flex: 1; height: 12px; margin: 0 71px 0 9px; border-radius: 6px; background: #d4d7e0; }

.panel { display: flex; align-items: flex-start; width: 261px; padding: 3px 2px 0 9px; border: solid var(--line); border-width: 0 0 1px 1px; color: #3a4256; }
.panel-title { gap: 4px; height: 24px; margin-right: auto; }
.rail { display: flex; flex-direction: column; align-items: center; gap: 12px; width: 44px; padding-top: 12px; border: solid var(--line); border-width: 0 0 1px 1px; }
.rail button { width: 24px; height: 24px; }
.handle { width: 20px; height: 4px; margin-bottom: 3px; border: solid #c9ccd3; border-width: 1px 0; }
.rail .rail-more { width: 38px; height: 42px; margin-top: auto; border-top: 1px solid var(--line); padding-top: 6px; }
.rail-more svg { width: 18px; height: 6px; }

.statusbar { display: flex; align-items: center; height: 28px; flex: none; }
.statusbar > .vline, .views .vline { height: 14px; }
.macro { margin: 0 11px 0 12px; }
.views { display: flex; align-items: center; margin-left: auto; width: 453px; }
.view { width: 24px; height: 24px; border-radius: 2px; margin-right: 2px; }
.view.on { background: #dbe0e7; }
.view-drop { gap: 3px; width: 28px; }
.views .vline { margin: 0 10px 0 12px; }
.views .vline.last { margin-right: 6px; }
.zoom-level { gap: 5px; font-size: 13px; }
.minus { width: 10px; height: 2px; margin: 0 12px 0 11px; background: var(--ink); }
.zoom-line { width: 60px; height: 1px; background: var(--ink); }

/* floating desktop tools */
.meter { position: fixed; right: 0; bottom: 122px; width: 18px; height: 72px; z-index: 3; stroke: none; }
.ime { position: fixed; right: 0; bottom: 0; display: flex; align-items: center; gap: 10px; width: 148px; height: 26px; padding: 0 3px 0 32px; background: #fff; border: 1px solid #a9cbe9; border-radius: 2px; color: #0c6fd1; z-index: 3; }
.ime b { font-size: 14px; }
.ime svg { width: 14px; height: 16px; fill: currentColor; stroke: none; }
.ime-logo { position: fixed; right: 116px; bottom: 0; width: 44px; height: 50px; stroke: none; z-index: 4; }
.watermark { position: fixed; right: 8px; bottom: 8px; display: flex; flex-direction: column; width: 108px; z-index: 5; white-space: nowrap; opacity: 0.75; }
.wm-name { font: 700 21px/26px "Noto Sans CJK SC", sans-serif; color: #4a8fd6; }
.wm-url { font: 16px/16px "Liberation Sans", sans-serif; color: #3fae62; }
```
FILE: app.js
```js
const scores = [847, 378, 378, 849, 849, 526, 736, 533, 849, 632, 844];
const letters = 'ABCDEFGHIJKLM'.split('');
const table = [['序号', '姓名', '成绩']].concat(scores.map((s, i) => [i + 1, letters[i], s]));
const active = { row: 15, col: 'L' };

let html = '<thead><tr><th class="corner-head"></th>';
letters.forEach(l => { html += `<th scope="col" class="col${l === active.col ? ' sel' : ''}">${l}</th>`; });
html += '<th></th></tr></thead><tbody>';
for (let r = 1; r <= 27; r++) {
  html += `<tr><th scope="row"${r === active.row ? ' class="sel"' : ''}>${r}</th>`;
  letters.concat('').forEach((l, c) => {
    const filled = table[r - 1] && c < 3;
    const cls = filled ? 'data' : r === active.row && l === active.col ? 'cursor' : '';
    html += `<td class="${cls}">${filled ? table[r - 1][c] : ''}</td>`;
  });
  html += '</tr>';
}
document.getElementById('grid').innerHTML = html + '</tbody>';

document.getElementById('points').innerHTML = scores
  .map((s, i) => `<circle cx="${113.5 + 45 * (i + 1)}" cy="${364.5 - s * 0.3783}" r="6"/>`)
  .join('');
```
